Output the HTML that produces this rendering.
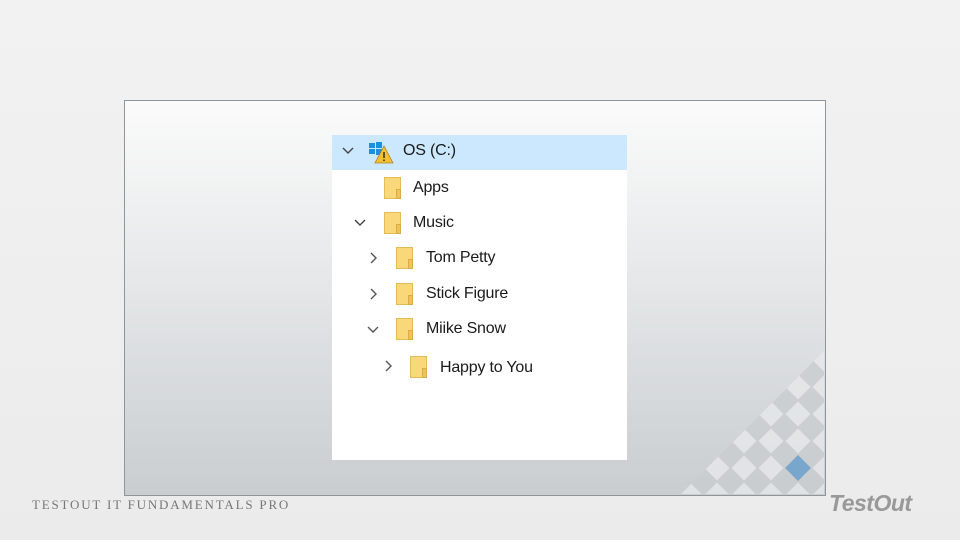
<!DOCTYPE html>
<html><head><style>
body{margin:0;width:960px;height:540px;overflow:hidden;background:linear-gradient(#f2f2f2,#ebebeb);font-family:"Liberation Sans",sans-serif;position:relative}
.frame{position:absolute;left:124px;top:100px;width:700px;height:394px;border:1px solid #8e959b;background:linear-gradient(#fbfbfb 0%,#e8eaeb 40%,#c9cdd0 100%);overflow:hidden}
.panel{position:absolute;left:332px;top:135px;width:295px;height:325px;background:#fff}
.sel{position:absolute;left:332px;top:135px;width:295px;height:35px;background:#cce8ff}
.t{position:absolute;font-size:16px;color:#1a1a1a;line-height:20px;letter-spacing:-0.2px}
.f{position:absolute;width:17px;height:22px;background:#f8d878;border:1px solid #e2bd55;box-sizing:border-box}
.f:after{content:"";position:absolute;right:-1px;bottom:-1px;width:5px;height:10px;background:#eec35a;border:1px solid #d9ad45;box-sizing:border-box}
.c{position:absolute;width:14px;height:14px}
</style></head><body>
<div class="frame"></div>
<svg style="position:absolute;left:0;top:0" width="960" height="540">
<defs>
<pattern id="p" patternUnits="userSpaceOnUse" x="784.5" y="454.5" width="27" height="27">
<rect width="27" height="27" fill="#c9cdd0"/>
<polygon points="13.5,1 26,13.5 13.5,26 1,13.5" fill="#e6e8ea"/>
</pattern>
<clipPath id="cp"><rect x="125" y="101" width="699" height="393"/></clipPath>
</defs>
<g clip-path="url(#cp)">
<polygon points="680,495 825,350 825,495" fill="url(#p)" opacity="0.8"/>
<polygon points="798,455 811,468 798,481 785,468" fill="#78a6cc"/>
</g>
</svg>
<div class="panel"></div>
<div class="sel"></div>
<svg class="c" style="left:341px;top:144px" viewBox="0 0 14 14"><path d="M2 4l5 5 5-5" fill="none" stroke="#444" stroke-width="1.4"/></svg>
<svg style="position:absolute;left:368px;top:140px" width="26" height="24" viewBox="0 0 26 24">
<rect x="1" y="3" width="6" height="5" fill="#1c90e0"/><rect x="8" y="2" width="6" height="6" fill="#1c90e0"/><rect x="1" y="9" width="6" height="5" fill="#1c90e0"/><rect x="8" y="9" width="6" height="6" fill="#1c90e0"/>
<polygon points="16,6 25,23 7,23" fill="#f4c030" stroke="#b08020" stroke-width="0.8"/><rect x="15.3" y="12" width="1.4" height="6" fill="#222"/><rect x="15.3" y="19.5" width="1.4" height="1.5" fill="#222"/>
</svg>
<div class="t" style="left:403px;top:141px">OS (C:)</div>
<div class="f" style="left:384px;top:177px"></div><div class="t" style="left:413px;top:178px">Apps</div>
<svg class="c" style="left:353px;top:216px" viewBox="0 0 14 14"><path d="M2 4l5 5 5-5" fill="none" stroke="#444" stroke-width="1.4"/></svg>
<div class="f" style="left:384px;top:212px"></div><div class="t" style="left:413px;top:213px">Music</div>
<svg class="c" style="left:366px;top:251px" viewBox="0 0 14 14"><path d="M5 2l5 5-5 5" fill="none" stroke="#555" stroke-width="1.4"/></svg>
<div class="f" style="left:396px;top:247px"></div><div class="t" style="left:426px;top:248px">Tom Petty</div>
<svg class="c" style="left:366px;top:287px" viewBox="0 0 14 14"><path d="M5 2l5 5-5 5" fill="none" stroke="#555" stroke-width="1.4"/></svg>
<div class="f" style="left:396px;top:283px"></div><div class="t" style="left:426px;top:284px">Stick Figure</div>
<svg class="c" style="left:366px;top:323px" viewBox="0 0 14 14"><path d="M2 4l5 5 5-5" fill="none" stroke="#555" stroke-width="1.4"/></svg>
<div class="f" style="left:396px;top:318px"></div><div class="t" style="left:426px;top:319px">Miike Snow</div>
<svg class="c" style="left:381px;top:359px" viewBox="0 0 14 14"><path d="M5 2l5 5-5 5" fill="none" stroke="#555" stroke-width="1.4"/></svg>
<div class="f" style="left:410px;top:356px"></div><div class="t" style="left:440px;top:358px">Happy to You</div>
<div style="position:absolute;left:32px;top:497px;font-family:'Liberation Serif',serif;font-size:13px;letter-spacing:1.8px;color:#777">TESTOUT IT FUNDAMENTALS PRO</div>
<div style="position:absolute;left:829px;top:490px;font-size:23px;font-weight:bold;font-style:italic;color:#999;letter-spacing:-0.5px">TestOut</div>
</body></html>
